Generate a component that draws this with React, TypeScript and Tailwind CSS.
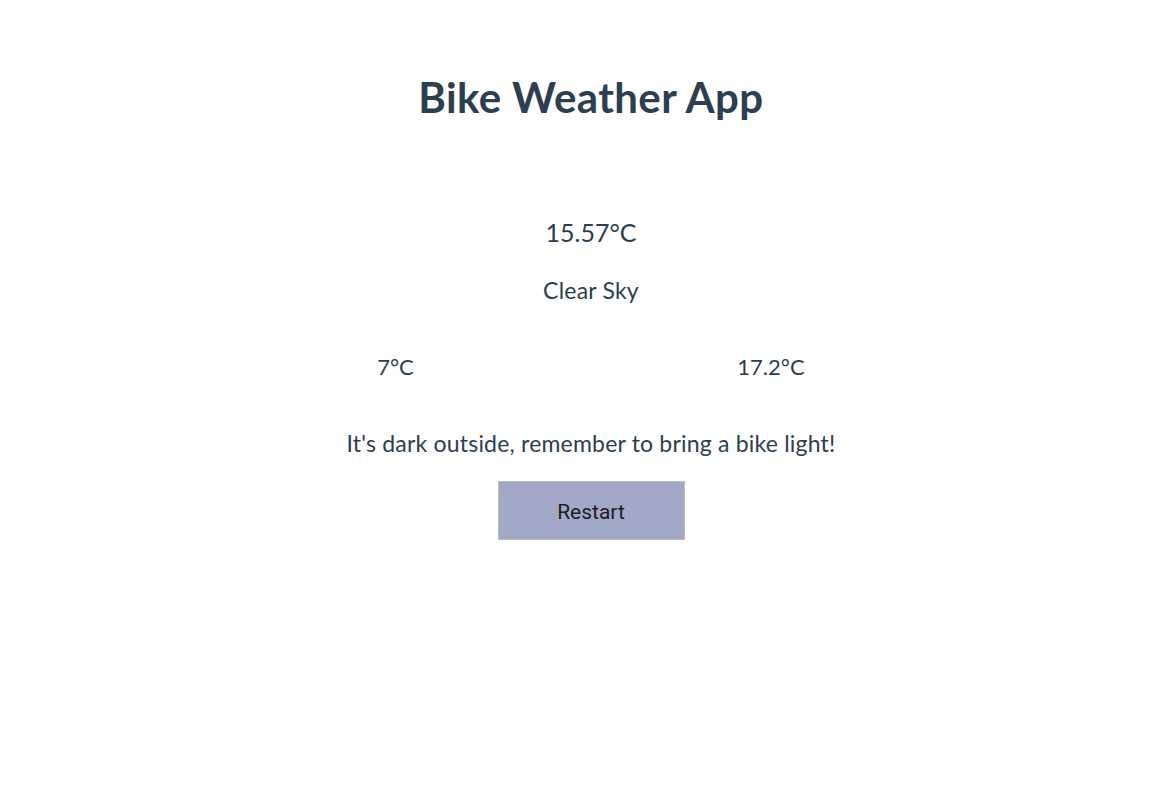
export default function App() {
  return (
    <div className="min-h-screen bg-white text-[#2c3e50]" style={{ fontFamily: 'Lato, "Liberation Sans", sans-serif' }}>
      <div className="flex flex-col items-center pt-[71px] pl-[20px]">
        <h1 className="text-[42px] leading-[52px] font-bold tracking-[0.4px]">Bike Weather App</h1>
        <div className="mt-[93px] text-[25px] leading-[32px]">15.57°C</div>
        <div className="mt-[27px] text-[23px] leading-[30px] tracking-[0.2px]">Clear Sky</div>
        <div className="mt-[47px] flex w-[750px] text-[22px] leading-[30px]">
          <div className="w-[375px] flex justify-center pr-[16px]">7°C</div>
          <div className="w-[375px] flex justify-center pr-[15px]">17.2°C</div>
        </div>
        <div className="mt-[46px] text-[23px] leading-[30px] tracking-[0.2px]">It's dark outside, remember to bring a bike light!</div>
        <button className="mt-[23px] w-[187px] h-[59px] pt-[4px] bg-[#a2a9c6] border border-[#bcbcbc] text-[21px] text-[#1c1c28]" style={{ fontFamily: 'Roboto, sans-serif' }}>
          Restart
        </button>
      </div>
    </div>
  );
}
